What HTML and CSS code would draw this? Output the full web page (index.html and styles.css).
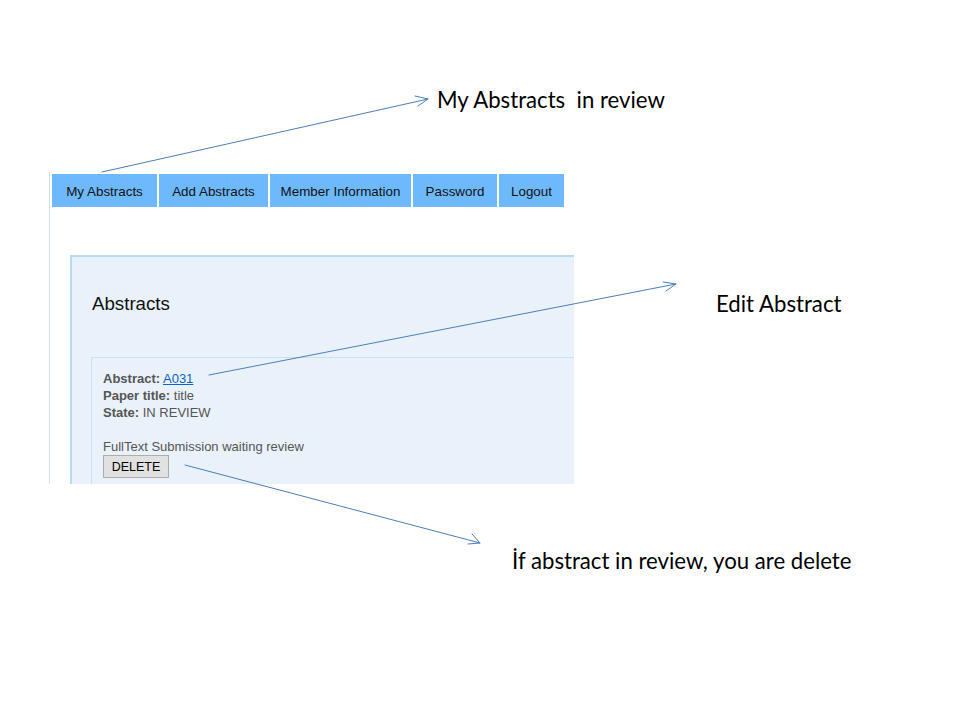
FILE: index.html
```html
<!DOCTYPE html>
<html lang="en">
<head>
    <meta charset="UTF-8">
    <title>My Abstracts</title>
    <link rel="stylesheet" href="styles.css">
</head>
<body>
    <div class="slide">
        <!-- Captured screen of the abstracts page -->
        <div class="shot">
            <ul class="tabs">
                <li>My Abstracts</li>
                <li>Add Abstracts</li>
                <li>Member Information</li>
                <li>Password</li>
                <li>Logout</li>
            </ul>
            <div class="panel">
                <h2>Abstracts</h2>
                <div class="item">
                    <b>Abstract:</b> <a href="#">A031</a><br>
                    <b>Paper title:</b> title<br>
                    <b>State:</b> IN REVIEW<br>
                    <br>
                    FullText Submission waiting review<br>
                    <button>DELETE</button>
                </div>
            </div>
        </div>

        <!-- Annotations -->
        <p class="note note-tabs">My Abstracts &nbsp;in review</p>
        <p class="note note-edit">Edit Abstract</p>
        <p class="note note-delete">İf abstract in review, you are delete</p>

        <svg class="arrows" width="960" height="720" viewBox="0 0 960 720">
            <g stroke="#4a7ebb" stroke-width="1" fill="none" stroke-linecap="round">
                <path d="M102 172 L428 99"/>
                <path d="M415 96 L428 99 L418 106"/>
                <path d="M209 375 L676 284"/>
                <path d="M663 282 L676 284 L666 291"/>
                <path d="M185 465 L480 543"/>
                <path d="M472 534 L480 543 L468 544"/>
            </g>
        </svg>
    </div>
</body>
</html>
```

FILE: styles.css
```css
body {
    margin: 0;
    background-color: #fff;
    font-family: Arial, "Liberation Sans", sans-serif;
}
.slide {
    position: relative;
    width: 960px;
    height: 720px;
    padding: 172px 0 0 49px;
    box-sizing: border-box;
}
.shot {
    width: 524px;
    height: 312px;
    border-left: 1px solid #d5dfe8;
    overflow: hidden;
}
.tabs {
    display: flex;
    gap: 2px;
    list-style: none;
    margin: 2px 0 0 2px;
    padding: 0;
}
.tabs li {
    height: 32px;
    padding-top: 1px;
    line-height: 33px;
    font-size: 13.4px;
    text-align: center;
    white-space: nowrap;
    color: #111;
    background-color: #6eb9fd;
}
.tabs li:nth-child(1) { width: 105px; }
.tabs li:nth-child(2) { width: 109px; }
.tabs li:nth-child(3) { width: 141px; }
.tabs li:nth-child(4) { width: 84px; }
.tabs li:nth-child(5) { width: 65px; }
.panel {
    margin: 48px 0 0 20px;
    padding: 30px 0 0 19px;
    height: 300px;
    background-color: #e9f2fa;
    border-top: 2px solid #b7dcf2;
    border-left: 2px solid #b7dcf2;
}
.panel h2 {
    margin: 0 0 0 1px;
    font-size: 18.7px;
    font-weight: normal;
    color: #111;
    line-height: 34px;
}
.item {
    margin-top: 36px;
    padding: 12px 0 0 11px;
    height: 200px;
    border-top: 1px solid #c9e2f1;
    border-left: 1px solid #c9e2f1;
    font-size: 13px;
    line-height: 17px;
    color: #555;
}
.item b {
    color: #555;
}
.item a {
    color: #0b63c5;
}
.item button {
    width: 66px;
    height: 23px;
    padding: 0;
    font-family: Arial, "Liberation Sans", sans-serif;
    font-size: 12.5px;
    color: #000;
    background-color: #e1e1e1;
    border: 1px solid #adadad;
    border-radius: 0;
}
.note {
    position: absolute;
    margin: 0;
    font-family: Lato, "Open Sans", sans-serif;
    font-size: 22.2px;
    color: #000;
    white-space: nowrap;
}
.note-tabs { left: 437px; top: 86px; }
.note-edit { left: 716px; top: 290px; }
.note-delete { left: 512px; top: 547px; }
.arrows {
    position: absolute;
    left: 0;
    top: 0;
}
```
